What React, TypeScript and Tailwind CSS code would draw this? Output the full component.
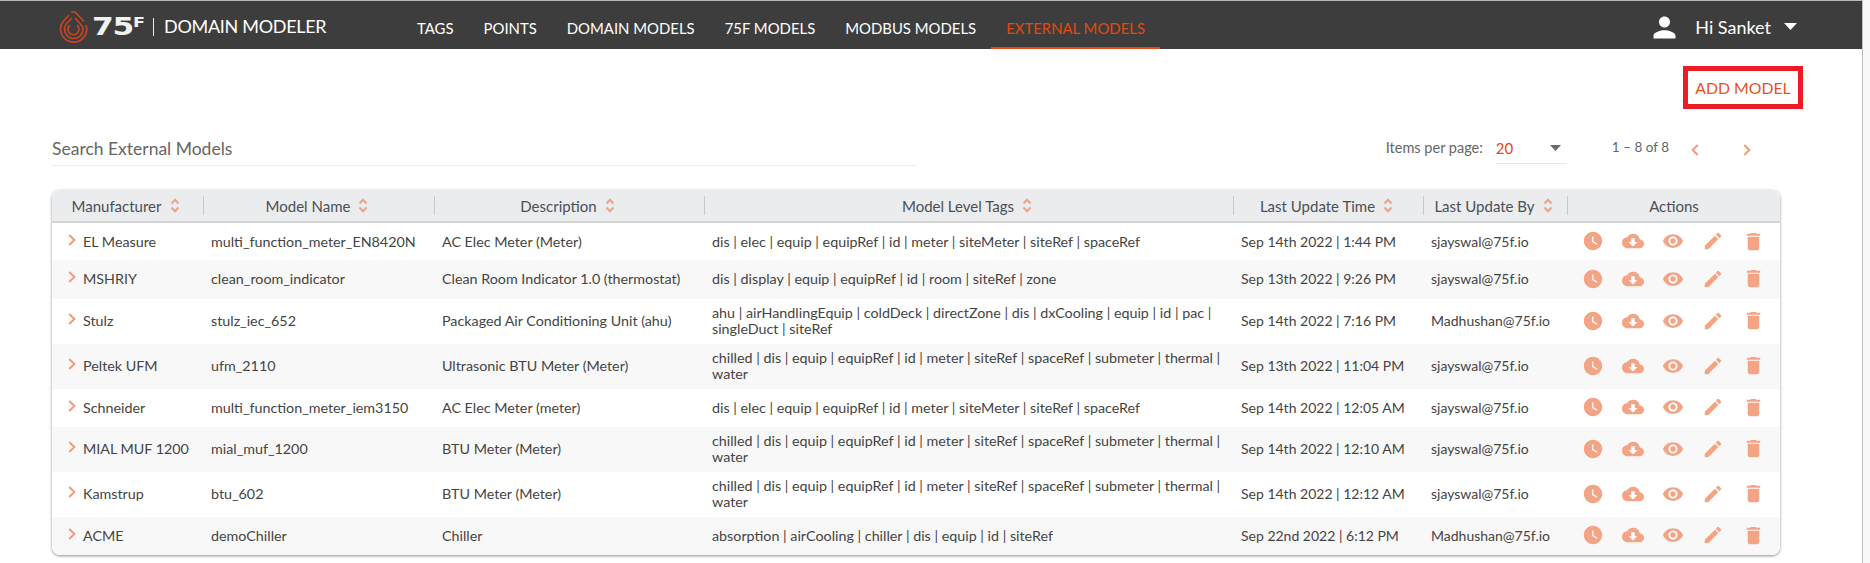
import React from 'react';
import { MdWatchLater, MdCloudDownload, MdVisibility, MdEdit, MdDelete, MdPerson } from 'react-icons/md';

const navItems = ['TAGS', 'POINTS', 'DOMAIN MODELS', '75F MODELS', 'MODBUS MODELS', 'EXTERNAL MODELS'];

const columns = [
  { label: 'Manufacturer', width: 'w-[151px]' },
  { label: 'Model Name', width: 'w-[231px]' },
  { label: 'Description', width: 'w-[270px]' },
  { label: 'Model Level Tags', width: 'w-[529px]' },
  { label: 'Last Update Time', width: 'w-[190px]' },
  { label: 'Last Update By', width: 'w-[144px]' },
];

const rows = [
  ['EL Measure', 'multi_function_meter_EN8420N', 'AC Elec Meter (Meter)', 'dis | elec | equip | equipRef | id | meter | siteMeter | siteRef | spaceRef', 'Sep 14th 2022 | 1:44 PM', 'sjayswal@75f.io'],
  ['MSHRIY', 'clean_room_indicator', 'Clean Room Indicator 1.0 (thermostat)', 'dis | display | equip | equipRef | id | room | siteRef | zone', 'Sep 13th 2022 | 9:26 PM', 'sjayswal@75f.io'],
  ['Stulz', 'stulz_iec_652', 'Packaged Air Conditioning Unit (ahu)', 'ahu | airHandlingEquip | coldDeck | directZone | dis | dxCooling | equip | id | pac | singleDuct | siteRef', 'Sep 14th 2022 | 7:16 PM', 'Madhushan@75f.io'],
  ['Peltek UFM', 'ufm_2110', 'Ultrasonic BTU Meter (Meter)', 'chilled | dis | equip | equipRef | id | meter | siteRef | spaceRef | submeter | thermal | water', 'Sep 13th 2022 | 11:04 PM', 'sjayswal@75f.io'],
  ['Schneider', 'multi_function_meter_iem3150', 'AC Elec Meter (meter)', 'dis | elec | equip | equipRef | id | meter | siteMeter | siteRef | spaceRef', 'Sep 14th 2022 | 12:05 AM', 'sjayswal@75f.io'],
  ['MIAL MUF 1200', 'mial_muf_1200', 'BTU Meter (Meter)', 'chilled | dis | equip | equipRef | id | meter | siteRef | spaceRef | submeter | thermal | water', 'Sep 14th 2022 | 12:10 AM', 'sjayswal@75f.io'],
  ['Kamstrup', 'btu_602', 'BTU Meter (Meter)', 'chilled | dis | equip | equipRef | id | meter | siteRef | spaceRef | submeter | thermal | water', 'Sep 14th 2022 | 12:12 AM', 'sjayswal@75f.io'],
  ['ACME', 'demoChiller', 'Chiller', 'absorption | airCooling | chiller | dis | equip | id | siteRef', 'Sep 22nd 2022 | 6:12 PM', 'Madhushan@75f.io'],
];

function Logo() {
  return (
    <svg width="29" height="32" viewBox="0 0 29 32" fill="none" stroke="#c8451f" strokeWidth="1.7" className="shrink-0">
      <path d="M10 4 L4.5 10 A13 13 0 1 0 27 14" />
      <path d="M13 7 L8 12 A9.2 9.2 0 1 0 23.5 15.5 L16 7" />
      <path d="M12 1 L16 1 L25 10.5" />
      <path d="M11 14 A5.5 5.5 0 1 0 18 14" />
    </svg>
  );
}

function SortIcon() {
  return (
    <svg width="10" height="15" viewBox="0 0 10 15" fill="none" stroke="#eaa388" strokeWidth="2" className="shrink-0">
      <path d="M1.5 5.5 L5 1.8 L8.5 5.5" />
      <path d="M1.5 9.5 L5 13.2 L8.5 9.5" />
    </svg>
  );
}

function Chevron({ left = false, className = '' }: { left?: boolean; className?: string }) {
  return (
    <svg width="8" height="12" viewBox="0 0 8 12" fill="none" stroke="#f09c7c" strokeWidth="2" className={className}>
      <path d={left ? 'M6.8 1 L1.6 6 L6.8 11' : 'M1.2 1 L6.4 6 L1.2 11'} />
    </svg>
  );
}

function Caret({ className = '', color }: { className?: string; color: string }) {
  return (
    <svg width="13" height="7" viewBox="0 0 13 7" className={className}>
      <path d="M0 0 H13 L6.5 7 Z" fill={color} />
    </svg>
  );
}

export default function App() {
  return (
    <div className="flex h-[563px] w-[1870px] overflow-hidden bg-[#f8f8f8] font-['Lato',sans-serif]">
      <div className="w-[1863px] shrink-0 bg-white border-r border-[#bdbdbd] border-t border-t-[#b8b8b8]">
        <header className="flex h-[48px] bg-[#3d3d3d] text-white">
          <div className="flex w-[402px] shrink-0 items-center pl-[59px] pt-[3px]">
            <Logo />
            <div className="ml-[4px] flex w-[54px] origin-left scale-x-[1.25] items-start font-['DejaVu_Sans',sans-serif] font-semibold leading-none text-[#f2f2f2]">
              <span className="text-[25px] tracking-[-1px]">75</span>
              <span className="mt-[1px] text-[14px]">F</span>
            </div>
            <span className="ml-[7px] h-[18px] w-px bg-[#eee]" />
            <span className="ml-[10px] text-[18px] tracking-[-0.3px] whitespace-nowrap">DOMAIN MODELER</span>
          </div>
          <nav className="flex">
            {navItems.map((item) => (
              <div
                key={item}
                className={`flex items-center px-[15px] pt-[8px] text-[14.9px] whitespace-nowrap border-b-2 ${item === 'EXTERNAL MODELS' ? 'border-[#e8490f] text-[#e5480f]' : 'border-transparent text-white'}`}
              >
                {item}
              </div>
            ))}
          </nav>
          <div className="ml-auto mr-[65px] flex items-center pt-[4px]">
            <MdPerson size={33} className="text-white" />
            <span className="ml-[14px] text-[18px] whitespace-nowrap">Hi Sanket</span>
            <Caret color="#ffffff" className="ml-[13px] mb-[2px]" />
          </div>
        </header>

        <div className="flex justify-end pt-[17px] pr-[59px]">
          <div className="flex h-[43px] w-[120px] items-center justify-center border-[5px] border-[#ed1c24] text-[15.8px] text-[#e8521c] whitespace-nowrap">
            ADD MODEL
          </div>
        </div>

        <div className="flex h-[56px] items-start pl-[52px] pr-[111px] pt-[18px]">
          <input
            placeholder="Search External Models"
            className="h-[39px] w-[864px] border-b border-[#ececec] pt-[4px] text-[17.5px] text-[#555] outline-none placeholder:text-[#666]"
          />
          <div className="ml-auto flex items-start text-[14.5px] text-[#666]">
            <span className="mt-[10px]">Items per page:</span>
            <div className="ml-[13px] flex h-[37px] w-[71px] items-center justify-between border-b border-[#e8e8e8] pt-[6px] pr-[6px] text-[#e5480f]">
              <span className="text-[15px]">20</span>
              <Caret color="#6a6a6a" className="h-[6px] w-[11px]" />
            </div>
            <span className="ml-[45px] mt-[10px] text-[13.5px] whitespace-nowrap">1 – 8 of 8</span>
            <Chevron left className="ml-[22px] mt-[17px]" />
            <Chevron className="ml-[44px] mt-[17px]" />
          </div>
        </div>

        <div className="ml-[52px] mt-[25px] w-[1728px] overflow-hidden rounded-[8px] shadow-[0_1px_3px_rgba(0,0,0,0.45)]">
          <table className="w-full table-fixed border-collapse text-[14px] leading-[16px] text-[#444]">
            <thead>
              <tr className="h-[32px] bg-[#ebecee] border-b-2 border-[#d4d4d4] text-[15px] font-normal text-[#4a4f57]">
                {columns.map((col, i) => (
                  <th key={col.label} className={`${col.width} p-0 font-normal`}>
                    <div className={`flex h-[19px] items-center justify-center gap-[8px] pr-[4px] ${i === 0 ? '' : 'border-l border-[#c9c9c9]'}`}>
                      <span>{col.label}</span>
                      <SortIcon />
                    </div>
                  </th>
                ))}
                <th className="p-0 font-normal">
                  <div className="flex h-[19px] items-center justify-center border-l border-[#c9c9c9]">Actions</div>
                </th>
              </tr>
            </thead>
            <tbody>
              {rows.map((row, i) => (
                <tr key={row[1]} className={`h-[38.25px] ${i % 2 === 1 ? 'bg-[#f8f8f8]' : 'bg-white'}`}>
                  <td className="py-[6.5px] pl-[16px] pr-0">
                    <div className="flex items-center whitespace-nowrap">
                      <Chevron className="mb-[4px] shrink-0" />
                      <span className="ml-[7px] text-[14.3px]">{row[0]}</span>
                    </div>
                  </td>
                  {row.slice(1).map((cell, j) => (
                    <td key={j} className={`py-[6.5px] px-[8px] whitespace-normal ${j < 3 ? 'text-[14.3px]' : ''}`}>
                      {cell}
                    </td>
                  ))}
                  <td className="p-0">
                    <div className="mb-[1px] flex items-center justify-between px-[15px] text-[#f4a484]">
                      <MdWatchLater size={22} />
                      <MdCloudDownload size={22} />
                      <MdVisibility size={22} />
                      <MdEdit size={22} />
                      <MdDelete size={23} />
                    </div>
                  </td>
                </tr>
              ))}
            </tbody>
          </table>
        </div>
      </div>
    </div>
  );
}
